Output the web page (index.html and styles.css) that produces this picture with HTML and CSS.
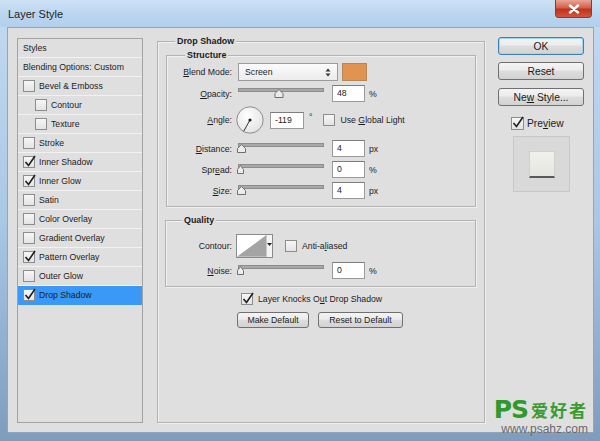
FILE: index.html
```html
<!DOCTYPE html>
<html>
<head>
<meta charset="utf-8">
<link rel="stylesheet" href="styles.css">
</head>
<body>
<div class="window">
  <div class="titlebar">
    <span class="title">Layer Style</span>
    <div class="close"><svg width="14" height="10" viewBox="0 0 14 10"><path d="M3 1.5 L11 8.5 M11 1.5 L3 8.5" stroke="#fff" stroke-width="2.4" stroke-linecap="round"/></svg></div>
  </div>
  <div class="content">
    <div class="styles-panel">
      <div class="srow">Styles</div>
      <div class="srow">Blending Options: Custom</div>
      <div class="srow"><span class="cb"></span><span class="stxt">Bevel &amp; Emboss</span></div>
      <div class="srow nested"><span class="cb"></span><span class="stxt">Contour</span></div>
      <div class="srow nested"><span class="cb"></span><span class="stxt">Texture</span></div>
      <div class="srow"><span class="cb"></span><span class="stxt">Stroke</span></div>
      <div class="srow"><span class="cb on"><svg width="14" height="14" viewBox="0 0 14 14"><path d="M2.5 7 L5.5 10.5 L12 1" fill="none" stroke="#1e1e1e" stroke-width="1.6"/></svg></span><span class="stxt">Inner Shadow</span></div>
      <div class="srow"><span class="cb on"><svg width="14" height="14" viewBox="0 0 14 14"><path d="M2.5 7 L5.5 10.5 L12 1" fill="none" stroke="#1e1e1e" stroke-width="1.6"/></svg></span><span class="stxt">Inner Glow</span></div>
      <div class="srow"><span class="cb"></span><span class="stxt">Satin</span></div>
      <div class="srow"><span class="cb"></span><span class="stxt">Color Overlay</span></div>
      <div class="srow"><span class="cb"></span><span class="stxt">Gradient Overlay</span></div>
      <div class="srow"><span class="cb on"><svg width="14" height="14" viewBox="0 0 14 14"><path d="M2.5 7 L5.5 10.5 L12 1" fill="none" stroke="#1e1e1e" stroke-width="1.6"/></svg></span><span class="stxt">Pattern Overlay</span></div>
      <div class="srow"><span class="cb"></span><span class="stxt">Outer Glow</span></div>
      <div class="srow selected"><span class="cb on"><svg width="14" height="14" viewBox="0 0 14 14"><path d="M2.5 7 L5.5 10.5 L12 1" fill="none" stroke="#1e1e1e" stroke-width="1.6"/></svg></span><span class="stxt">Drop Shadow</span></div>
    </div>

    <div class="group main">
      <span class="legend">Drop Shadow</span>
      <div class="group structure">
        <span class="legend legend-sub">Structure</span>
        <div class="row r-blend">
          <span class="lbl"><u>B</u>lend Mode:</span>
          <div class="select"><span>Screen</span><svg width="6" height="9" viewBox="0 0 6 9"><path d="M0.5 3.5 L3 0.5 L5.5 3.5 Z M0.5 5.5 L3 8.5 L5.5 5.5 Z" fill="#333"/></svg></div>
          <div class="swatch"></div>
        </div>
        <div class="row r-gap4">
          <span class="lbl"><u>O</u>pacity:</span>
          <svg class="slider" width="88" height="17" viewBox="0 0 88 17"><rect x="1.5" y="3.5" width="85" height="3" fill="#a9a9a9" stroke="#8c8c8c"/><polygon points="38,12.5 46,12.5 46,8.5 42,4.5 38,8.5" fill="#ececec" stroke="#6f6f6f"/></svg>
          <div class="num">48</div><span class="unit">%</span>
        </div>
        <div class="row r-angle">
          <span class="lbl"><u>A</u>ngle:</span>
          <svg class="dial" width="28" height="28" viewBox="0 0 28 28"><defs><radialGradient id="dg" cx="0.4" cy="0.35" r="0.7"><stop offset="0" stop-color="#ffffff"/><stop offset="1" stop-color="#e2e2e2"/></radialGradient></defs><circle cx="14" cy="14" r="13.2" fill="url(#dg)" stroke="#8e8e8e"/><line x1="14" y1="14" x2="7.6" y2="25.4" stroke="#333" stroke-width="1"/><circle cx="14" cy="14" r="1.6" fill="#222"/></svg>
          <div class="num angle-num">-119</div><span class="deg">°</span>
          <span class="cb gl"></span><span class="cbl">Use <u>G</u>lobal Light</span>
        </div>
        <div class="row r-gap6">
          <span class="lbl"><u>D</u>istance:</span>
          <svg class="slider" width="88" height="17" viewBox="0 0 88 17"><rect x="1.5" y="3.5" width="85" height="3" fill="#a9a9a9" stroke="#8c8c8c"/><polygon points="0.5,12.5 8.5,12.5 8.5,8.5 4.5,4.5 0.5,8.5" fill="#ececec" stroke="#6f6f6f"/></svg>
          <div class="num">4</div><span class="unit">px</span>
        </div>
        <div class="row r-gap4">
          <span class="lbl">Spr<u>e</u>ad:</span>
          <svg class="slider" width="88" height="17" viewBox="0 0 88 17"><rect x="1.5" y="3.5" width="85" height="3" fill="#a9a9a9" stroke="#8c8c8c"/><polygon points="0.5,12.5 6.5,12.5 6.5,8.5 3.5,4.5 0.5,8.5" fill="#ececec" stroke="#6f6f6f"/></svg>
          <div class="num">0</div><span class="unit">%</span>
        </div>
        <div class="row r-gap4">
          <span class="lbl"><u>S</u>ize:</span>
          <svg class="slider" width="88" height="17" viewBox="0 0 88 17"><rect x="1.5" y="3.5" width="85" height="3" fill="#a9a9a9" stroke="#8c8c8c"/><polygon points="0.5,12.5 8.5,12.5 8.5,8.5 4.5,4.5 0.5,8.5" fill="#ececec" stroke="#6f6f6f"/></svg>
          <div class="num">4</div><span class="unit">px</span>
        </div>
      </div>

      <div class="group quality">
        <span class="legend legend-q">Quality</span>
        <div class="row r-contour">
          <span class="lbl lbl-c">Contour:</span>
          <div class="contour">
            <svg width="30" height="22" viewBox="0 0 30 22"><rect width="30" height="22" fill="#fff"/><polygon points="0,22 30,0 30,22" fill="#a4a4a4"/></svg>
            <div class="cdrop"><svg width="5" height="3" viewBox="0 0 5 3"><path d="M0 0 L5 0 L2.5 3 Z" fill="#222"/></svg></div>
          </div>
          <span class="cb aa"></span><span class="cbl">Anti-a<u>l</u>iased</span>
        </div>
        <div class="row r-gap4">
          <span class="lbl"><u>N</u>oise:</span>
          <svg class="slider" width="88" height="17" viewBox="0 0 88 17"><rect x="1.5" y="3.5" width="85" height="3" fill="#a9a9a9" stroke="#8c8c8c"/><polygon points="0.5,12.5 6.5,12.5 6.5,8.5 3.5,4.5 0.5,8.5" fill="#ececec" stroke="#6f6f6f"/></svg>
          <div class="num">0</div><span class="unit">%</span>
        </div>
      </div>

      <div class="knock">
        <span class="cb on"><svg width="14" height="14" viewBox="0 0 14 14"><path d="M2.5 7 L5.5 10.5 L12 1" fill="none" stroke="#1e1e1e" stroke-width="1.6"/></svg></span><span class="cbl">Layer Knocks O<u>u</u>t Drop Shadow</span>
      </div>
      <div class="defaults">
        <div class="btn small b-make"><span>Make Default</span></div>
        <div class="btn small b-reset"><span>Reset to Default</span></div>
      </div>
    </div>

    <div class="side">
      <div class="btn big ok"><span>OK</span></div>
      <div class="btn big b2"><span>Reset</span></div>
      <div class="btn big b3"><span>Ne<u>w</u> Style...</span></div>
      <div class="preview-row">
        <span class="cb on pcb"><svg width="14" height="14" viewBox="0 0 14 14"><path d="M2.5 7 L5.5 10.5 L12 1" fill="none" stroke="#1e1e1e" stroke-width="1.6"/></svg></span><span class="ptxt">Pre<u>v</u>iew</span>
      </div>
      <div class="thumb"><div class="thumb-in"></div></div>
    </div>

    <div class="watermark">
      <div class="wm-top"><span class="wm-ps">PS</span><span class="wm-cn">爱好者</span></div>
      <div class="wm-url">www.psahz.com</div>
    </div>
  </div>
</div>
</body>
</html>
```

FILE: styles.css
```css
html, body {
  margin: 0;
  padding: 0;
  background: #a6c2e0;
}
u { text-decoration: underline; text-underline-offset: 1px; }

.window {
  width: 600px;
  height: 441px;
  display: flex;
  flex-direction: column;
  background: linear-gradient(180deg, #c3daf1 0%, #aac7e6 50%, #7f9cbd 100%);
  font-family: "Liberation Sans", Arial, sans-serif;
  color: #1c1c1c;
  overflow: hidden;
}

.titlebar {
  height: 27px;
  flex: 0 0 27px;
  display: flex;
  justify-content: space-between;
  align-items: flex-start;
  background: linear-gradient(180deg, #cde1f5 0%, #b9d4ef 60%, #b2cfec 100%);
}
.title {
  font-size: 11px;
  margin: 8px 0 0 8px;
  color: #1e1e1e;
}
.close {
  width: 37px;
  height: 18px;
  margin: 0 8px 0 0;
  border: 1px solid #8a3a32;
  border-top: none;
  border-radius: 0 0 4px 4px;
  background: linear-gradient(180deg, #e9a596 0%, #d4604b 45%, #c1321c 55%, #d2553c 100%);
  display: flex;
  align-items: center;
  justify-content: center;
  box-sizing: border-box;
}

.content {
  position: relative;
  width: 587px;
  height: 406px;
  margin-left: 7px;
  box-sizing: border-box;
  background: #dfdfdf;
  border: 1px solid #8fa6bf;
  display: flex;
  align-items: flex-start;
  padding: 10px 0 0 9px;
}

/* left styles list */
.styles-panel {
  width: 126px;
  height: 385px;
  box-sizing: border-box;
  border: 1px solid #a3a3a3;
  display: flex;
  flex-direction: column;
  font-size: 8.7px;
}
.srow {
  height: 19px;
  flex: 0 0 19px;
  box-sizing: border-box;
  border-bottom: 1px solid #f2f2f2;
  display: flex;
  align-items: center;
  padding-left: 5px;
}
.srow.nested { padding-left: 17px; }
.srow.selected { background: #3a98f6; border-bottom-color: #3a98f6; }
.stxt { margin-left: 4px; }

.cb {
  width: 12px;
  height: 12px;
  flex: 0 0 12px;
  box-sizing: border-box;
  border: 1px solid #8d8d8d;
  background: linear-gradient(180deg, #f6f6f6, #e4e4e4);
  position: relative;
  display: inline-block;
}
.cb svg { position: absolute; left: -1px; top: -2px; }

/* middle group */
.group {
  box-sizing: border-box;
  border: 1px solid #b3b3b3;
  box-shadow: inset 1px 1px 0 #f0f0f0, 1px 1px 0 #f0f0f0;
  display: flex;
  flex-direction: column;
}
.main {
  width: 328px;
  height: 382px;
  margin: 3px 0 0 14px;
  font-size: 8.7px;
}
.legend {
  align-self: flex-start;
  height: 12px;
  line-height: 12px;
  margin: -7px 0 0 17px;
  padding: 0 2px;
  background: #dfdfdf;
  font-weight: bold;
  font-size: 8.9px;
}
.legend-sub { margin-left: 18px; }
.legend-q { margin-left: 16px; }

.structure {
  margin: 8px 8px 0 8px;
  padding-bottom: 7px;
}
.quality {
  margin: 13px 8px 0 7px;
  padding-bottom: 7px;
}

.row {
  display: flex;
  align-items: center;
  height: 17px;
}
.r-blend { height: 18px; margin-top: 2px; }
.r-gap4 { margin-top: 4px; }
.r-gap6 { margin-top: 6px; }
.r-angle { height: 28px; margin-top: 4px; }
.r-contour { height: 24px; margin-top: 8px; }

.lbl {
  width: 65px;
  flex: 0 0 65px;
  text-align: right;
  margin-right: 6px;
}
.quality .lbl { width: 66px; flex-basis: 66px; }
.lbl-c { margin-right: 4px; }

.select {
  width: 100px;
  height: 18px;
  box-sizing: border-box;
  border: 1px solid #9c9c9c;
  background: linear-gradient(180deg, #fbfbfb, #ececec);
  display: flex;
  align-items: center;
  justify-content: space-between;
  padding: 0 6px 0 6px;
}
.swatch {
  width: 25px;
  height: 18px;
  margin-left: 4px;
  box-sizing: border-box;
  border: 1px solid #b3875a;
  background: #e0944f;
}

.slider { display: block; flex: 0 0 88px; margin-left: -1px; }
.num {
  width: 33px;
  height: 17px;
  box-sizing: border-box;
  margin-left: 7px;
  border: 1px solid #9a9a9a;
  border-top-color: #7d7d7d;
  background: #fff;
  padding-left: 4px;
  line-height: 15px;
}
.unit { margin-left: 4px; }

.dial { display: block; margin-left: -2px; }
.num.angle-num { margin-left: 6px; width: 34px; }
.deg { margin-left: 5px; align-self: flex-start; margin-top: 6px; }
.gl { margin-left: 11px; }
.cbl { margin-left: 5px; }

.contour {
  width: 37px;
  height: 24px;
  box-sizing: border-box;
  border: 1px solid #8a8a8a;
  display: flex;
  background: #fff;
}
.contour svg { display: block; }
.cdrop {
  width: 5px;
  border-left: 1px solid #c9c9c9;
  background: #f4f4f4;
  display: flex;
  justify-content: center;
  padding-top: 8px;
}
.cdrop svg { display: block; }
.aa { margin-left: 12px; }

.knock {
  display: flex;
  align-items: center;
  margin: 6px 0 0 83px;
  height: 12px;
}
.defaults {
  display: flex;
  margin: 7px 0 0 79px;
  gap: 9px;
}

.btn {
  box-sizing: border-box;
  border: 1px solid #707070;
  border-radius: 3px;
  background: linear-gradient(180deg, #f4f4f4 0%, #ebebeb 45%, #dddddd 50%, #d2d2d2 100%);
  display: flex;
  align-items: center;
  justify-content: center;
  color: #1a1a1a;
  white-space: nowrap;
}
.btn.small { height: 16px; font-size: 8.7px; }
.b-make { width: 72px; }
.b-reset { width: 85px; }

.side {
  width: 86px;
  margin: -1px 0 0 13px;
  display: flex;
  flex-direction: column;
  font-size: 10.3px;
}
.btn.big { height: 18px; width: 86px; }
.ok { border-color: #3c7fb1; box-shadow: inset 0 0 0 1px #9fd5f5; }
.b2 { margin-top: 7px; }
.b3 { margin-top: 8px; }
.preview-row {
  display: flex;
  align-items: center;
  margin: 11px 0 0 13px;
  height: 13px;
}
.pcb { width: 13px; height: 13px; flex-basis: 13px; }
.ptxt { margin-left: 3px; }
.thumb {
  width: 57px;
  height: 56px;
  margin: 6px 0 0 15px;
  box-sizing: border-box;
  border: 1px solid #c8c8c8;
  background: #d9d9d9;
  display: flex;
  align-items: center;
  justify-content: center;
}
.thumb-in {
  width: 26px;
  height: 27px;
  background: linear-gradient(180deg, #f0f0ec, #e6e6e1);
  border: 1px solid #d0d0cc;
  border-bottom: 2px solid #5a5a58;
  box-sizing: border-box;
}

.watermark {
  position: absolute;
  right: 5px;
  bottom: -4px;
  display: flex;
  flex-direction: column;
  align-items: flex-end;
}
.wm-top { display: flex; align-items: center; height: 25px; }
.wm-ps {
  font-family: "DejaVu Sans", sans-serif;
  font-weight: bold;
  font-size: 25px;
  line-height: 25px;
  color: #2f9a2a;
  letter-spacing: -1px;
}
.wm-cn {
  font-family: "Noto Sans CJK SC", sans-serif;
  font-weight: bold;
  font-size: 17px;
  line-height: 20px;
  color: #3a9c30;
  margin-left: 3px;
  letter-spacing: 2px;
}
.wm-url {
  font-family: "Liberation Sans", Arial, sans-serif;
  font-size: 12px;
  line-height: 14px;
  color: #6a6a6a;
}
```
